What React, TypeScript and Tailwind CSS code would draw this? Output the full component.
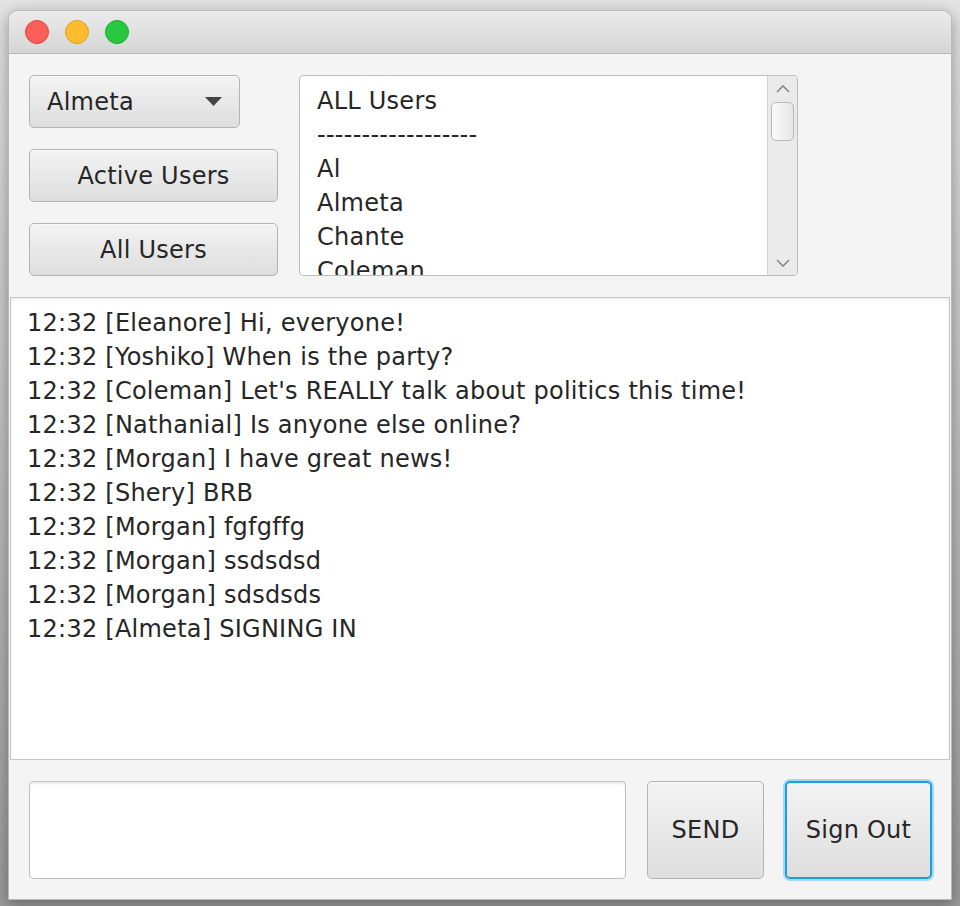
import React from "react";

const users = ["ALL Users", "------------------", "Al", "Almeta", "Chante", "Coleman"];

const messages = [
  "12:32 [Eleanore] Hi, everyone!",
  "12:32 [Yoshiko] When is the party?",
  "12:32 [Coleman] Let's REALLY talk about politics this time!",
  "12:32 [Nathanial] Is anyone else online?",
  "12:32 [Morgan] I have great news!",
  "12:32 [Shery] BRB",
  "12:32 [Morgan] fgfgffg",
  "12:32 [Morgan] ssdsdsd",
  "12:32 [Morgan] sdsdsds",
  "12:32 [Almeta] SIGNING IN",
];

const btn =
  "rounded-[5px] border border-[#b3b3b3] bg-gradient-to-b from-[#f3f3f3] to-[#dedede] text-[#262626] shadow-[inset_0_1px_0_#fafafa]";

function TrafficLights() {
  return (
    <div className="flex gap-[16px] pl-[16px]">
      <span className="w-[24px] h-[24px] rounded-full bg-[#fc5f57] border border-[#e0443e]" />
      <span className="w-[24px] h-[24px] rounded-full bg-[#fdbc2e] border border-[#dea123]" />
      <span className="w-[24px] h-[24px] rounded-full bg-[#2ac840] border border-[#1aab29]" />
    </div>
  );
}

function UserList() {
  return (
    <div className="w-[499px] h-[201px] flex rounded-[4px] border border-[#bdbdbd] bg-white overflow-hidden">
      <div className="flex-1 pl-[17px] pt-[8px] overflow-hidden leading-[34px]">
        {users.map((u, i) => (
          <div key={i} className="whitespace-nowrap">
            {u}
          </div>
        ))}
      </div>
      <div className="w-[30px] bg-[#eaeaea] border-l border-[#d4d4d4] flex flex-col items-center">
        <svg width="16" height="10" viewBox="0 0 16 10" className="mt-[8px]">
          <path d="M2 8 L8 2 L14 8" fill="none" stroke="#8a8a8a" strokeWidth="1.6" />
        </svg>
        <div className="mt-[8px] w-[23px] h-[39px] rounded-[5px] border border-[#b8b8b8] bg-gradient-to-r from-[#fafafa] to-[#e6e6e6]" />
        <div className="flex-1" />
        <svg width="16" height="10" viewBox="0 0 16 10" className="mb-[7px]">
          <path d="M2 2 L8 8 L14 2" fill="none" stroke="#8a8a8a" strokeWidth="1.6" />
        </svg>
      </div>
    </div>
  );
}

export default function App() {
  return (
    <div
      className="w-[960px] h-[906px] bg-gradient-to-b from-[#e4e4e4] to-[#9a9a9a] pl-[8px] pt-[10px] overflow-hidden tracking-[0.25px]"
      style={{ fontFamily: '"DejaVu Sans", "Liberation Sans", sans-serif' }}
    >
      <div className="w-[944px] h-[890px] flex flex-col rounded-t-[10px] bg-[#f4f4f4] border border-[#b9b9b9] shadow-[0_4px_16px_rgba(0,0,0,0.35)] overflow-hidden">
        {/* title bar */}
        <div className="h-[43px] shrink-0 flex items-center bg-gradient-to-b from-[#ebebeb] to-[#d5d5d5] border-b border-[#b8b8b8]">
          <TrafficLights />
        </div>

        {/* top controls */}
        <div className="flex gap-[21px] pl-[20px] pt-[21px] text-[24px] text-[#262626]">
          <div className="flex flex-col gap-[21px]">
            <div className={`${btn} w-[211px] h-[53px] flex items-center justify-between pl-[17px] pr-[17px]`}>
              <span>Almeta</span>
              <svg width="17" height="9" viewBox="0 0 17 9">
                <path d="M0 0 H17 L8.5 9 Z" fill="#444" />
              </svg>
            </div>
            <div className={`${btn} w-[249px] h-[53px] flex items-center justify-center`}>Active Users</div>
            <div className={`${btn} w-[249px] h-[53px] flex items-center justify-center`}>All Users</div>
          </div>
          <UserList />
        </div>

        {/* chat log */}
        <div className="mt-[21px] mx-[1px] h-[463px] bg-white border border-[#c4c4c4] shadow-[inset_0_2px_3px_rgba(0,0,0,0.06)] pl-[16px] pt-[8px] text-[24px] leading-[34px] text-[#262626]">
          {messages.map((m, i) => (
            <div key={i} className="whitespace-nowrap">
              {m}
            </div>
          ))}
        </div>

        {/* input row */}
        <div className="flex gap-[21px] pl-[20px] pt-[21px] text-[24px] text-[#262626]">
          <div className="w-[597px] h-[98px] rounded-[4px] border border-[#c0c0c0] bg-white shadow-[inset_0_2px_2px_rgba(0,0,0,0.08)]" />
          <div className={`${btn} w-[117px] h-[98px] flex items-center justify-center`}>SEND</div>
          <div className="w-[147px] h-[98px] rounded-[5px] border-2 border-[#1a9ee2] shadow-[0_0_0_2px_#a9d6f2] bg-gradient-to-b from-[#f3f3f3] to-[#dedede] flex items-center justify-center">
            Sign Out
          </div>
        </div>
      </div>
    </div>
  );
}
